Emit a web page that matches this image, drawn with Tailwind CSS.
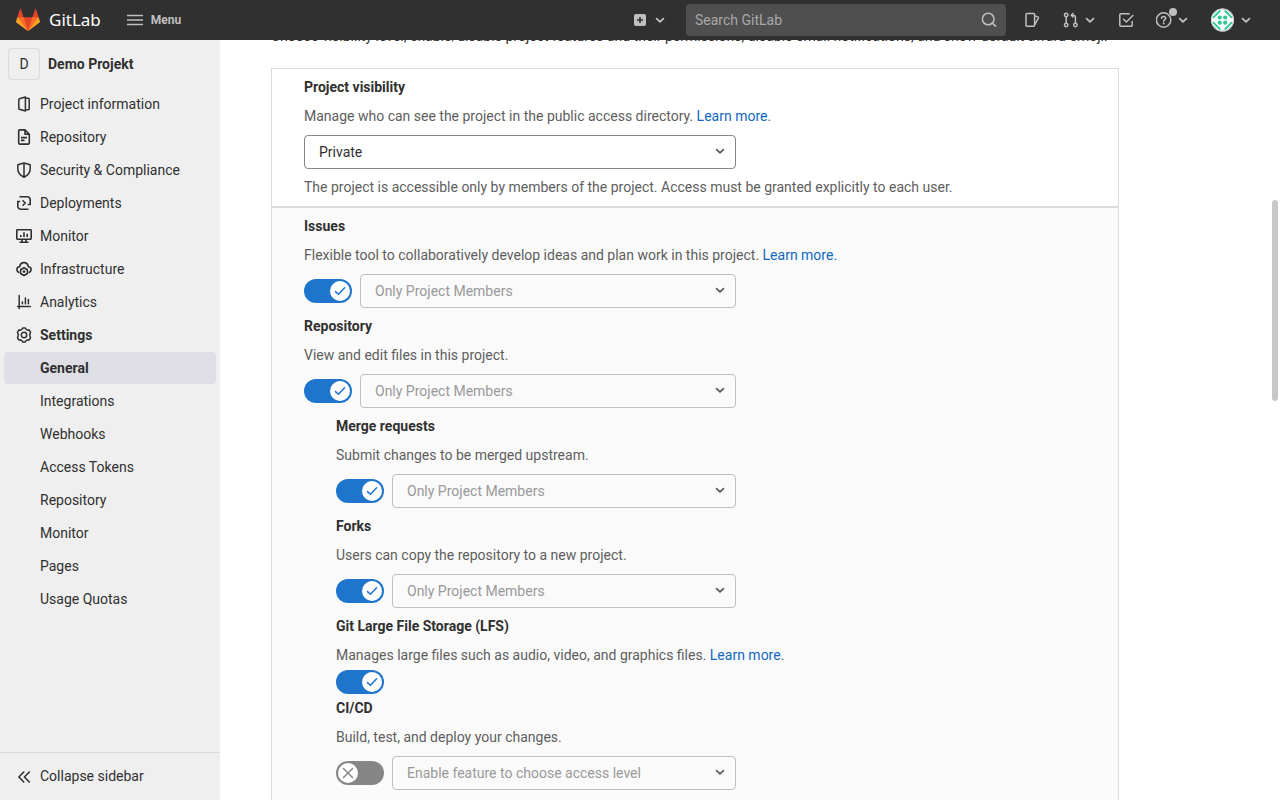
<!DOCTYPE html>
<html lang="en">
<head>
<meta charset="utf-8">
<meta name="viewport" content="width=device-width, initial-scale=1">
<title>General · Settings · Demo Projekt · GitLab</title>
<script src="https://cdn.jsdelivr.net/npm/@tailwindcss/browser@4"></script>
</head>
<body class="h-screen overflow-hidden bg-white font-['Roboto','Noto_Sans',sans-serif] text-sm leading-5 text-[#303030]">

<svg class="hidden" aria-hidden="true">
  <symbol id="chevron" viewBox="0 0 12 12"><path d="M2.6 4.6 6 7.900l3.400-3.300" fill="none" stroke="currentColor" stroke-width="1.800" stroke-linecap="round" stroke-linejoin="round"/></symbol>
  <symbol id="check" viewBox="0 0 16 16"><path d="M3.5 8.6 6.4 11.3 12.6 4.8" fill="none" stroke="currentColor" stroke-width="1.5" stroke-linecap="round" stroke-linejoin="round"/></symbol>
  <symbol id="cross" viewBox="0 0 16 16"><path d="M3.5 3.5l9 9m0-9-9 9" fill="none" stroke="currentColor" stroke-width="1.5" stroke-linecap="round"/></symbol>
</svg>

<header class="fixed inset-x-0 top-0 z-10 flex h-10 items-center bg-[#303030] pr-7 pl-4 text-[#bfbfbf]">
  <a href="#" class="flex items-center gap-[9px]">
    <svg class="size-6" viewBox="0 0 36 36" aria-hidden="true">
      <path fill="#e24329" d="M2 14l9.38 9v-9l-4-12.28c-.205-.632-1.176-.632-1.38 0z"/>
      <path fill="#e24329" d="M34 14l-9.38 9v-9l4-12.28c.205-.632 1.176-.632 1.38 0z"/>
      <path fill="#e24329" d="M18 34.38 3 14h30z"/>
      <path fill="#fc6d26" d="M18 34.38 11.38 14H2l4 11z"/>
      <path fill="#fc6d26" d="M18 34.38 24.62 14H34l-4 11z"/>
      <path fill="#fca326" d="M2 14 .1 20.16c-.18.565 0 1.2.5 1.56l17.42 12.66z"/>
      <path fill="#fca326" d="M34 14l1.9 6.16c.18.565 0 1.2-.5 1.56L18 34.38z"/>
    </svg>
    <span class="font-['Noto_Sans',sans-serif] text-[17px] leading-6 text-white">GitLab</span>
  </a>
  <button type="button" class="ml-[26px] flex items-center gap-2 text-xs font-bold">
    <svg class="size-4" viewBox="0 0 16 16" aria-hidden="true"><path d="M0 3.5h16M0 8h16M0 12.5h16" stroke="currentColor" stroke-width="1.4"/></svg>
    Menu
  </button>
  <button type="button" aria-label="Create new" class="ml-auto flex items-center gap-1.5">
    <svg class="size-4" viewBox="0 0 16 16" aria-hidden="true"><rect x="2" y="2" width="12" height="12" rx="2" fill="currentColor"/><path d="M8 5v6M5 8h6" stroke="#303030" stroke-width="1.6"/></svg>
    <svg class="size-3"><use href="#chevron"/></svg>
  </button>
  <div class="relative ml-5 w-80">
    <input type="text" aria-label="Search GitLab" placeholder="Search GitLab" class="block h-8 w-full rounded bg-[#4f4f4f] pr-9 pl-[9px] placeholder:text-[#a8a8a8] placeholder:opacity-100">
    <svg class="absolute top-2 right-[9px] size-4" viewBox="0 0 16 16" aria-hidden="true"><circle cx="7.200" cy="7" r="5.800" fill="none" stroke="currentColor" stroke-width="1.5"/><path d="m11.3 11 3.2 3.2" stroke="currentColor" stroke-width="1.7" stroke-linecap="round"/></svg>
  </div>
  <nav aria-label="Shortcuts" class="ml-[19px] flex items-center gap-[22px]">
    <a href="#" aria-label="Issues"><svg class="size-4" viewBox="0 0 16 16" fill="none" stroke="currentColor" stroke-width="1.5" stroke-linejoin="round"><rect x="1" y="1.600" width="8.600" height="12.600" rx="1"/><path d="m9.800 3.900 3.100 1a.8.8 0 0 1 .5 1.100L9.800 12.600"/></svg></a>
    <button type="button" aria-label="Merge requests" class="flex items-center gap-[5px]">
      <svg class="size-4" viewBox="0 0 16 16" fill="none" stroke="currentColor" stroke-width="1.5"><circle cx="3.200" cy="3" r="1.700"/><circle cx="3.200" cy="13" r="1.700"/><circle cx="12.400" cy="13" r="1.700"/><path d="M3.200 4.700v6.600M12.400 11.300V5.400a2.200 2.200 0 0 0-2.200-2.200H8.400"/><path d="M10.400 1.100 8.200 3.200l2.200 2.200" stroke-linejoin="round"/></svg>
      <svg class="size-3"><use href="#chevron"/></svg>
    </button>
    <a href="#" aria-label="To-Do List"><svg class="size-4" viewBox="0 0 16 16" fill="none" stroke="currentColor" stroke-width="1.5" stroke-linecap="round" stroke-linejoin="round"><path d="M11.200 1.800H2.800a1 1 0 0 0-1 1v10.400a1 1 0 0 0 1 1h10.400a1 1 0 0 0 1-1V9.400"/><path d="m5.600 7.200 2.800 2.800 6.400-6.600"/></svg></a>
    <button type="button" aria-label="Help" class="relative flex items-center gap-[5px]">
      <svg class="size-4" viewBox="0 0 16 16" fill="none" stroke="currentColor" stroke-width="1.5"><circle cx="7.600" cy="8" r="7.200"/><path d="M5.500 6.300c.1-1.200 1-1.900 2.100-1.900 1.200 0 2.100.7 2.100 1.800 0 1.300-2 1.500-2 3" stroke-linecap="round"/><circle cx="7.700" cy="11.500" r="1" fill="currentColor" stroke="none"/></svg>
      <span class="absolute -top-1 left-[13px] size-2 rounded-full bg-[#bfbfbf]"></span>
      <svg class="size-3"><use href="#chevron"/></svg>
    </button>
    <button type="button" aria-label="User menu" class="flex items-center gap-[5px]">
      <svg class="size-6" viewBox="0 0 24 24" aria-hidden="true">
        <clipPath id="round"><circle cx="11.500" cy="12" r="11.500"/></clipPath>
        <g clip-path="url(#round)">
          <rect width="24" height="24" fill="#fff"/>
          <g fill="none" stroke="#2fc795" stroke-width="1.800">
            <path d="M2 9.800 9.300 2.500M13.700 2.500 21 9.800M21 14.200l-7.300 7.300M9.300 21.500 2 14.200"/>
            <path d="M2.500 5.500 5 3M18 3l2.500 2.500M20.500 18.500 18 21M5 21l-2.500-2.500" stroke-width="1.200"/>
          </g>
          <g fill="#2fc795">
            <circle cx="8.800" cy="9.500" r="2.100"/><circle cx="14.200" cy="9.500" r="2.100"/><circle cx="8.800" cy="14.700" r="2.100"/><circle cx="14.200" cy="14.700" r="2.100"/>
          </g>
        </g>
        <circle cx="11.500" cy="12" r="11" fill="none" stroke="#c4c9c7" stroke-width="1"/>
      </svg>
      <svg class="size-3"><use href="#chevron"/></svg>
    </button>
  </nav>
</header>

<div class="flex h-full">
  <aside class="flex w-55 shrink-0 flex-col bg-[#efefef] pt-10">
    <a href="#" class="mt-2 mb-2 ml-2 flex items-center gap-2 font-bold">
      <span class="flex size-8 items-center justify-center rounded border border-[#dcdcdc] font-normal">D</span>
      Demo Projekt
    </a>
    <nav aria-label="Project navigation" class="flex flex-1 flex-col gap-px px-1 [&>a]:flex [&>a]:h-8 [&>a]:shrink-0 [&>a]:items-center [&>a]:gap-2 [&>a]:rounded [&>a]:pl-3 [&_svg]:size-4">
      <a href="#"><svg viewBox="0 0 16 16" fill="none" stroke="currentColor" stroke-width="1.500" stroke-linejoin="round"><path d="M9.400 1v14l-6-1.800a.8.8 0 0 1-.6-.8V3.600a.8.8 0 0 1 .6-.8zM9.800 2.300h2.400a1 1 0 0 1 1 1v9.400a1 1 0 0 1-1 1H9.800"/></svg>Project information</a>
      <a href="#"><svg viewBox="0 0 16 16" fill="none" stroke="currentColor" stroke-width="1.600" stroke-linejoin="round"><path d="M9 .9H3.700a1 1 0 0 0-1 1v12.200a1 1 0 0 0 1 1h8.600a1 1 0 0 0 1-1V5.200zM9 .9v4.300h4.300"/><path d="M5 8.600h6M5 11.400h3.500"/></svg>Repository</a>
      <a href="#"><svg viewBox="0 0 16 16" fill="none" stroke="currentColor" stroke-width="1.500" stroke-linejoin="round"><path d="M8 1 1.800 2.700V7c0 3.800 2.400 6.500 6.200 8.200 3.800-1.700 6.200-4.400 6.200-8.200V2.700zM8 1v14"/></svg>Security &amp; Compliance</a>
      <a href="#"><svg viewBox="0 0 16 16" fill="none" stroke="currentColor" stroke-width="1.600"><path d="M3.500 1.800h7.700a3 3 0 0 1 3 3v4.700h-2.400M12.500 14.200H4.800a3 3 0 0 1-3-3V6.500h2.400"/><path d="M7 5.800 9.200 8 7 10.200" stroke-linecap="round" stroke-linejoin="round"/></svg>Deployments</a>
      <a href="#"><svg viewBox="0 0 16 16" fill="none" stroke="currentColor" stroke-width="1.600"><rect x=".8" y="1.800" width="14.400" height="9.400" rx=".6"/><path d="M4.800 9V7M8 9V4.200M11.200 9V5.800M6 11v3M10 11v3M3.500 14.200h9"/></svg>Monitor</a>
      <a href="#"><svg viewBox="0 0 16 16" fill="none" stroke="currentColor" stroke-width="1.600"><path d="M2.600 11.300A2.900 2.900 0 0 1 .9 8.600c0-1.600 1.200-2.700 2.700-2.800C4 3.200 5.700 1.600 8 1.600s4 1.600 4.400 4.200c1.500.1 2.700 1.200 2.700 2.800 0 1.200-.6 2.200-1.700 2.700" stroke-linecap="round"/><path d="m8 6.700 3.400 2v3.800l-3.400 2-3.400-2V8.700z" stroke-linejoin="round"/><circle cx="8" cy="10.600" r="1.300" fill="currentColor" stroke="none"/></svg>Infrastructure</a>
      <a href="#"><svg viewBox="0 0 16 16" fill="none" stroke="currentColor" stroke-width="1.500" stroke-linecap="round"><path d="M3.200 1.400v13.200M1.600 12.400h12.600M6.400 9.700V8M9.400 9.700V4M12.400 9.700V5.600"/></svg>Analytics</a>
      <a href="#" class="font-bold"><svg viewBox="0 0 16 16" fill="none" stroke="currentColor" stroke-width="1.500" stroke-linejoin="round"><path d="M5.800 2.400 6.800.9h2.400l1 1.500 1.300.8 1.800-.1 1.300 2.200L13.800 7v2l.8 1.700-1.300 2.200-1.800-.1-1.300.8-1 1.500H6.800l-1-1.500-1.300-.8-1.800.1-1.300-2.200L2.200 9V7l-.8-1.700 1.300-2.200 1.800.1z"/><circle cx="8" cy="8" r="2.700"/></svg>Settings</a>
      <a href="#" aria-current="page" class="bg-[#dfdfe5] font-bold"><span class="w-4"></span>General</a>
      <a href="#"><span class="w-4"></span>Integrations</a>
      <a href="#"><span class="w-4"></span>Webhooks</a>
      <a href="#"><span class="w-4"></span>Access Tokens</a>
      <a href="#"><span class="w-4"></span>Repository</a>
      <a href="#"><span class="w-4"></span>Monitor</a>
      <a href="#"><span class="w-4"></span>Pages</a>
      <a href="#"><span class="w-4"></span>Usage Quotas</a>
    </nav>
    <button type="button" class="flex h-12 shrink-0 items-center gap-2 border-t border-[#dbdbdb] pb-px pl-4">
      <svg class="size-4" viewBox="0 0 16 16" fill="none" stroke="currentColor" stroke-width="1.600" stroke-linecap="round" stroke-linejoin="round" aria-hidden="true"><path d="M7.800 4 2.900 9l4.900 5M13.300 4 8.400 9l4.900 5"/></svg>
      Collapse sidebar
    </button>
  </aside>

  <main class="min-w-0 flex-1 overflow-hidden pt-[26px] pr-6 pl-[51px]">
    <form class="max-w-[848px]">
      <p class="mb-[22px]">Choose visibility level, enable/disable project features and their permissions, disable email notifications, and show default award emoji.</p>

      <section class="border border-[#dbdbdb] px-8 pt-2 pb-[9px] text-[#5e5e5e]">
        <label for="visibility" class="mb-[9px] block font-bold text-[#303030]">Project visibility</label>
        <p class="mb-[9px]">Manage who can see the project in the public access directory. <a href="#" class="text-[#1068bf]">Learn more</a>.</p>
        <div class="relative mb-2 max-w-[432px]">
          <select id="visibility" class="block h-[34px] w-full appearance-none rounded border border-[#868686] bg-white px-3.5 text-[#303030]"><option>Private</option></select>
          <svg class="pointer-events-none absolute top-[10px] right-[10px] size-3 text-[#5e5e5e]"><use href="#chevron"/></svg>
        </div>
        <p>The project is accessible only by members of the project. Access must be granted explicitly to each user.</p>
      </section>

      <section class="flex flex-col gap-2 border border-[#dbdbdb] bg-[#fafafa] px-8 pt-2 pb-8 text-[#5e5e5e] [&_h3]:mb-[9px] [&_h3]:font-bold [&_h3]:text-[#303030]">
        <div>
          <h3>Issues</h3>
          <p class="mb-[9px]">Flexible tool to collaboratively develop ideas and plan work in this project. <a href="#" class="text-[#1068bf]">Learn more.</a></p>
          <div class="flex max-w-[432px] items-center gap-2">
            <label class="flex h-6 w-12 shrink-0 justify-end rounded-full bg-[#1f75cb] p-0.5">
              <input type="checkbox" role="switch" aria-label="Issues" class="sr-only" checked>
              <span class="flex size-5 items-center justify-center rounded-full bg-white text-[#1f75cb]"><svg class="size-4"><use href="#check"/></svg></span>
            </label>
            <div class="relative flex-1">
              <select disabled aria-label="Issues access" class="block h-[34px] w-full appearance-none rounded border border-[#bfbfbf] bg-[#fafafa] px-3.5 text-[#999] opacity-100"><option>Only Project Members</option></select>
              <svg class="pointer-events-none absolute top-[10px] right-[10px] size-3"><use href="#chevron"/></svg>
            </div>
          </div>
        </div>
        <div>
          <h3>Repository</h3>
          <p class="mb-[9px]">View and edit files in this project.</p>
          <div class="flex max-w-[432px] items-center gap-2">
            <label class="flex h-6 w-12 shrink-0 justify-end rounded-full bg-[#1f75cb] p-0.5">
              <input type="checkbox" role="switch" aria-label="Repository" class="sr-only" checked>
              <span class="flex size-5 items-center justify-center rounded-full bg-white text-[#1f75cb]"><svg class="size-4"><use href="#check"/></svg></span>
            </label>
            <div class="relative flex-1">
              <select disabled aria-label="Repository access" class="block h-[34px] w-full appearance-none rounded border border-[#bfbfbf] bg-[#fafafa] px-3.5 text-[#999] opacity-100"><option>Only Project Members</option></select>
              <svg class="pointer-events-none absolute top-[10px] right-[10px] size-3"><use href="#chevron"/></svg>
            </div>
          </div>
        </div>

        <div class="flex flex-col gap-2 pl-8">
          <div>
            <h3>Merge requests</h3>
            <p class="mb-[9px]">Submit changes to be merged upstream.</p>
            <div class="flex max-w-[400px] items-center gap-2">
              <label class="flex h-6 w-12 shrink-0 justify-end rounded-full bg-[#1f75cb] p-0.5">
                <input type="checkbox" role="switch" aria-label="Merge requests" class="sr-only" checked>
                <span class="flex size-5 items-center justify-center rounded-full bg-white text-[#1f75cb]"><svg class="size-4"><use href="#check"/></svg></span>
              </label>
              <div class="relative flex-1">
                <select disabled aria-label="Merge requests access" class="block h-[34px] w-full appearance-none rounded border border-[#bfbfbf] bg-[#fafafa] px-3.5 text-[#999] opacity-100"><option>Only Project Members</option></select>
                <svg class="pointer-events-none absolute top-[10px] right-[10px] size-3"><use href="#chevron"/></svg>
              </div>
            </div>
          </div>
          <div>
            <h3>Forks</h3>
            <p class="mb-[9px]">Users can copy the repository to a new project.</p>
            <div class="flex max-w-[400px] items-center gap-2">
              <label class="flex h-6 w-12 shrink-0 justify-end rounded-full bg-[#1f75cb] p-0.5">
                <input type="checkbox" role="switch" aria-label="Forks" class="sr-only" checked>
                <span class="flex size-5 items-center justify-center rounded-full bg-white text-[#1f75cb]"><svg class="size-4"><use href="#check"/></svg></span>
              </label>
              <div class="relative flex-1">
                <select disabled aria-label="Forks access" class="block h-[34px] w-full appearance-none rounded border border-[#bfbfbf] bg-[#fafafa] px-3.5 text-[#999] opacity-100"><option>Only Project Members</option></select>
                <svg class="pointer-events-none absolute top-[10px] right-[10px] size-3"><use href="#chevron"/></svg>
              </div>
            </div>
          </div>
          <div class="-mb-1">
            <h3>Git Large File Storage (LFS)</h3>
            <p class="mb-[5px]">Manages large files such as audio, video, and graphics files. <a href="#" class="text-[#1068bf]">Learn more</a>.</p>
            <label class="flex h-6 w-12 justify-end rounded-full bg-[#1f75cb] p-0.5">
              <input type="checkbox" role="switch" aria-label="Git Large File Storage (LFS)" class="sr-only" checked>
              <span class="flex size-5 items-center justify-center rounded-full bg-white text-[#1f75cb]"><svg class="size-4"><use href="#check"/></svg></span>
            </label>
          </div>
          <div>
            <h3>CI/CD</h3>
            <p class="mb-[9px]">Build, test, and deploy your changes.</p>
            <div class="flex max-w-[400px] items-center gap-2">
              <label class="flex h-6 w-12 shrink-0 rounded-full bg-[#868686] p-0.5">
                <input type="checkbox" role="switch" aria-label="CI/CD" class="sr-only">
                <span class="flex size-5 items-center justify-center rounded-full bg-white text-[#868686]"><svg class="size-4"><use href="#cross"/></svg></span>
              </label>
              <div class="relative flex-1">
                <select disabled aria-label="CI/CD access" class="block h-[34px] w-full appearance-none rounded border border-[#bfbfbf] bg-[#fafafa] px-3.5 text-[#999] opacity-100"><option>Enable feature to choose access level</option></select>
                <svg class="pointer-events-none absolute top-[10px] right-[10px] size-3"><use href="#chevron"/></svg>
              </div>
            </div>
          </div>
        </div>
      </section>
    </form>
  </main>
</div>

<div class="fixed top-[200px] right-0.5 h-[201px] w-1.5 rounded-full bg-[#c8c8c8]" aria-hidden="true"></div>
</body>
</html>
